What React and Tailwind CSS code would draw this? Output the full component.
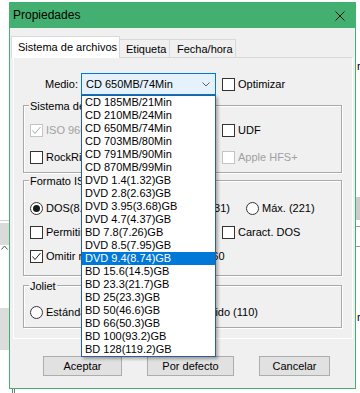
import React from 'react';

const medios = [
  'CD 185MB/21Min',
  'CD 210MB/24Min',
  'CD 650MB/74Min',
  'CD 703MB/80Min',
  'CD 791MB/90Min',
  'CD 870MB/99Min',
  'DVD 1.4(1.32)GB',
  'DVD 2.8(2.63)GB',
  'DVD 3.95(3.68)GB',
  'DVD 4.7(4.37)GB',
  'BD 7.8(7.26)GB',
  'DVD 8.5(7.95)GB',
  'DVD 9.4(8.74)GB',
  'BD 15.6(14.5)GB',
  'BD 23.3(21.7)GB',
  'BD 25(23.3)GB',
  'BD 50(46.6)GB',
  'BD 66(50.3)GB',
  'BD 100(93.2)GB',
  'BD 128(119.2)GB',
];

function Check({ checked, disabled, label }) {
  return (
    <div className="flex items-center gap-[3px] whitespace-nowrap">
      <span
        className={`w-[13px] h-[13px] shrink-0 border bg-white flex items-center justify-center ${
          disabled ? 'border-[#c4c4c4]' : 'border-[#333333]'
        }`}
      >
        {checked && (
          <svg width="11" height="11" viewBox="0 0 11 11">
            <polyline
              points="1.5,5.5 4,8.5 9.5,2"
              fill="none"
              stroke={disabled ? '#a8a8a8' : '#222222'}
              strokeWidth="1"
            />
          </svg>
        )}
      </span>
      <span className={disabled ? 'text-[#a0a0a0]' : ''}>{label}</span>
    </div>
  );
}

function Radio({ checked, label }) {
  return (
    <div className="flex items-center gap-[3px] whitespace-nowrap">
      <span className="w-[13px] h-[13px] shrink-0 rounded-full border border-[#333333] bg-white flex items-center justify-center">
        {checked && <span className="w-[7px] h-[7px] rounded-full bg-[#1a1a1a]" />}
      </span>
      <span>{label}</span>
    </div>
  );
}

function Group({ label, className, children }) {
  return (
    <div
      className={`relative ml-[9px] w-[319px] border border-[#a9a9a9] shadow-[inset_1px_1px_0_#ffffff,1px_1px_0_#ffffff] ${className}`}
    >
      <span className="absolute left-[5px] -top-[6px] px-[1px] bg-[#f0f0f0] whitespace-nowrap">{label}</span>
      {children}
    </div>
  );
}

export default function App() {
  return (
    <div className="relative w-[360px] h-[393px] overflow-hidden bg-white text-[11px] leading-[13px] text-black font-['Liberation_Sans',Arial,sans-serif]">
      {/* app behind the dialog */}
      <div className="absolute left-0 top-[220px] w-[9px] h-px bg-[#cfcfcf]" />
      <div className="absolute left-0 top-[223px] w-[9px] h-[22px] bg-[#dadada]" />
      <svg className="absolute left-[1px] top-[245px]" width="7" height="5" viewBox="0 0 7 5">
        <polyline points="0.5,4.5 3.5,1 6.5,4.5" fill="none" stroke="#555" strokeWidth="1" />
      </svg>
      <div className="absolute left-0 top-[308px] w-[9px] h-[42px] bg-[#dcdcdc]" />
      <div className="absolute left-[356px] top-[197px] w-[4px] h-[23px] bg-[#cdcdcd]" />
      <div className="absolute left-[356px] top-[226px] w-[4px] h-px bg-[#9a9a9a]" />
      <div className="absolute left-[356px] top-[246px] w-[4px] h-px bg-[#9a9a9a]" />
      <span className="absolute left-[357px] top-[60px]">r</span>
      <span className="absolute left-[357px] top-[311px]">r</span>
      <div className="absolute left-[12px] top-[389px] w-px h-[4px] bg-[#777]" />
      <div className="absolute left-[14px] top-[389px] w-px h-[4px] bg-[#777]" />

      {/* dialog window */}
      <div className="absolute left-[9px] top-[2px] w-[347px] h-[387px] border border-[#43b072] bg-[#f0f0f0] flex flex-col">
        <div className="h-[25px] shrink-0 bg-[#43b072] flex items-center justify-between pl-[3px] pr-[10px] text-[12px]">
          <span>Propiedades</span>
          <svg width="10" height="10" viewBox="0 0 10 10">
            <path d="M0.5 0.5 L9.5 9.5 M9.5 0.5 L0.5 9.5" stroke="#111" strokeWidth="1" fill="none" />
          </svg>
        </div>

        <div className="flex flex-col pt-[8px]">
          {/* tabs */}
          <div className="relative z-10 flex items-end ml-[1px] h-[22px]">
            <div className="w-[109px] h-[22px] bg-white border border-[#d9d9d9] border-b-0 pl-[6px] flex items-center">
              Sistema de archivos
            </div>
            <div className="w-[50px] h-[19px] border border-[#d9d9d9] border-l-0 border-b-0 pl-[6px] flex items-center">
              Etiqueta
            </div>
            <div className="w-[66px] h-[19px] border border-[#d9d9d9] border-l-0 border-b-0 pl-[7px] flex items-center">
              Fecha/hora
            </div>
          </div>

          {/* tab page */}
          <div className="-mt-px ml-[3px] w-[340px] h-[282px] border border-white border-t-[#d9d9d9] flex flex-col pt-[15px]">
            <div className="flex items-center h-[22px]">
              <span className="w-[64px] text-right">Medio:</span>
              <div className="ml-[3px] w-[135px] h-[22px] border border-[#0078d7] bg-[#e5f1fb] flex items-center justify-between pl-[4px] pr-[5px]">
                <span>CD 650MB/74Min</span>
                <svg width="8" height="5" viewBox="0 0 8 5">
                  <polyline points="0.5,0.5 4,4 7.5,0.5" fill="none" stroke="#606060" strokeWidth="1" />
                </svg>
              </div>
              <div className="ml-[6px]">
                <Check label="Optimizar" />
              </div>
            </div>

            <Group label="Sistema de archivos" className="mt-[10px] h-[68px] pt-[18px] pl-[6px]">
              <div className="flex flex-col gap-[14px]">
                <div className="flex items-center h-[13px]">
                  <div className="w-[192px]">
                    <Check checked disabled label="ISO 9660" />
                  </div>
                  <Check label="UDF" />
                </div>
                <div className="flex items-center h-[13px]">
                  <div className="w-[192px]">
                    <Check label="RockRidge" />
                  </div>
                  <Check disabled label="Apple HFS+" />
                </div>
              </div>
            </Group>

            <Group label="Formato ISO" className="mt-[7px] h-[96px] pt-[21px] pl-[6px]">
              <div className="flex flex-col gap-[11px]">
                <div className="flex items-center h-[13px]">
                  <div className="w-[200px] flex justify-between">
                    <Radio checked label="DOS(8.3)" />
                    <Radio label="Nivel 2 (31)" />
                  </div>
                  <div className="ml-[16px]">
                    <Radio label="Máx. (221)" />
                  </div>
                </div>
                <div className="flex items-center h-[13px]">
                  <div className="w-[192px]">
                    <Check label="Permitir nombres largos" />
                  </div>
                  <Check label="Caract. DOS" />
                </div>
                <div className="flex items-center h-[13px]">
                  <Check checked label="Omitir números de versión ISO 9660" />
                </div>
              </div>
            </Group>

            <Group label="Joliet" className="mt-[9px] h-[43px] pt-[20px] pl-[6px]">
              <div className="w-[228px] h-[13px] flex items-center justify-between">
                <Radio label="Estándar (64)" />
                <Radio checked label="Extendido (110)" />
              </div>
            </Group>
          </div>

          {/* buttons */}
          <div className="flex mt-[17px]">
            <button className="ml-[33px] w-[79px] h-[20px] bg-[#e1e1e1] border border-[#adadad]">Aceptar</button>
            <button className="ml-[25px] w-[87px] h-[20px] bg-[#e1e1e1] border border-[#adadad]">Por defecto</button>
            <button className="ml-[25px] w-[71px] h-[20px] bg-[#e1e1e1] border border-[#adadad]">Cancelar</button>
          </div>
        </div>
      </div>

      {/* open combo list */}
      <div className="absolute z-20 left-[81px] top-[95px] w-[135px] h-[262px] bg-white border border-[#2c5d93] shadow-[2px_2px_3px_rgba(0,0,0,0.3)]">
        {medios.map((m, i) => (
          <div
            key={m}
            className={`h-[13px] leading-[13px] pl-[3px] whitespace-nowrap ${i === 12 ? 'bg-[#0078d7] text-white' : ''}`}
          >
            {m}
          </div>
        ))}
      </div>
    </div>
  );
}
